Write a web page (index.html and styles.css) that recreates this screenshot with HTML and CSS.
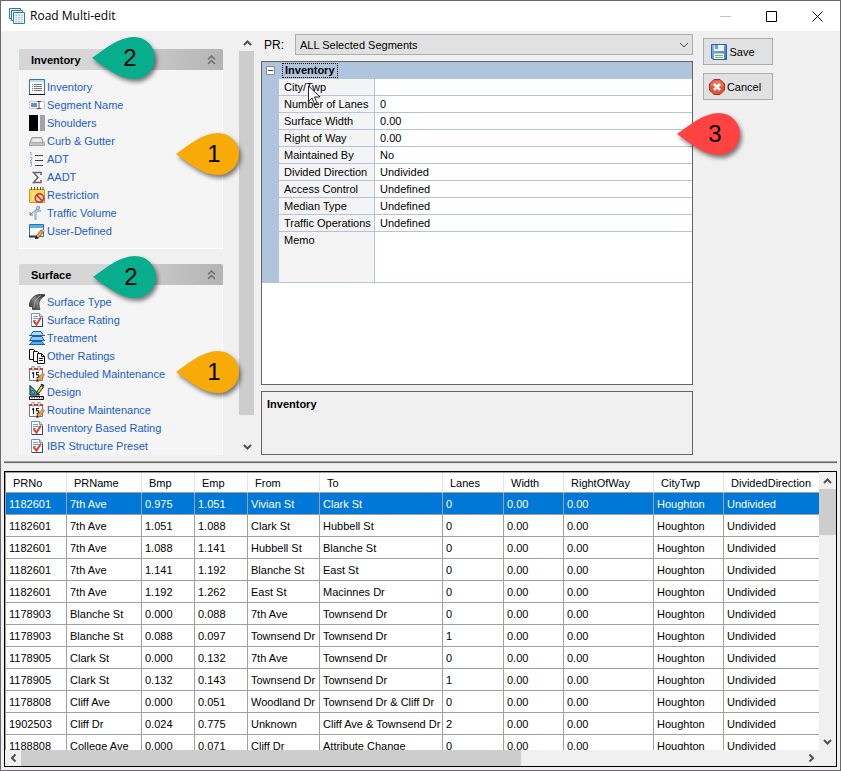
FILE: index.html
```html
<!DOCTYPE html>
<html lang="en">
<head>
<meta charset="UTF-8">
<meta name="viewport" content="width=device-width, initial-scale=1.0">
<title>Road Multi-edit</title>
<link rel="stylesheet" href="styles.css">
</head>
<body>

<!-- shared icons -->
<svg class="defs" width="0" height="0" aria-hidden="true">
  <defs>
    <linearGradient id="roadFill" x1="0" y1="1" x2="1" y2="0"><stop offset="0" stop-color="#222"/><stop offset=".5" stop-color="#888"/><stop offset="1" stop-color="#222"/></linearGradient>
    <linearGradient id="saveFill" x1="0" y1="0" x2="1" y2="1"><stop offset="0" stop-color="#8ebcf0"/><stop offset="1" stop-color="#3c74c8"/></linearGradient>
    <symbol id="chevUp" viewBox="0 0 9 6"><path d="M1 5L4.500 1.500L8 5" fill="none" stroke="#505050" stroke-width="2"/></symbol>
    <symbol id="collapse" viewBox="0 0 9 10"><path d="M1 4.500L4.500 1L8 4.500M1 9L4.500 5.500L8 9" fill="none" stroke="#6e6e6e" stroke-width="1.500"/></symbol>
    <symbol id="report" viewBox="0 0 16 16">
      <path d="M2.500 1.500h8l3 3v10h-11z" fill="#fff" stroke="#6f93cc"/>
      <path d="M10.500 1.500v3h3" fill="#cfe0f6" stroke="#6f93cc"/>
      <path d="M4 4.500h5M4 6.500h7M4 8.500h3" stroke="#7d9bcb"/>
      <path d="M3 14.500h11M13.500 6v8" stroke="#24457e"/>
      <path d="M4.500 9l3 3.500L12 5.500" fill="none" stroke="#d8462c" stroke-width="2"/>
    </symbol>
    <symbol id="calendar" viewBox="0 0 16 16">
      <path d="M.5 2.500h13v12H.5z" fill="#fff" stroke="#777"/>
      <path d="M0 2h14v2H0z" fill="#c8472f"/>
      <path d="M3 0h2v4H3zM9 0h2v4H9z" fill="#fff" stroke="#555" stroke-width=".6"/>
      <path d="M3 7.500l1.500-1V12M10 6.500H7.500v2.200c3-.8 3.500 3.300 0 3" fill="none" stroke="#222" stroke-width="1.200"/>
      <path d="M8 13l5-5 2 2-5 5-2.500.5z" fill="#f3a33c" stroke="#9a4c18" stroke-width=".6"/>
      <path d="M13 8l1.200-1.200 2 2L15 10z" fill="#e58c8c"/><path d="M7.500 15.500l.5-2.500 2 2z" fill="#222"/>
    </symbol>
    <symbol id="marker" viewBox="0 0 64 42"><path d="M0 21C14 11 27 0 42 0a21 21 0 0 1 0 42C27 42 14 31 0 21z"/></symbol>
  </defs>
</svg>

<div class="window">
  <header class="titlebar">
    <svg class="app-icon" width="17" height="16" viewBox="0 0 17 16">
      <path d="M.5.500h11v10H.5z" fill="#e6f2fa" stroke="#2d7ca8"/><path d="M2.500 2.500h11v10h-11z" fill="#e6f2fa" stroke="#2d7ca8"/>
      <path d="M4.500 4.500h11v11h-11z" fill="#fff" stroke="#2d7ca8"/>
      <path d="M6 6.500h8v8H6z" fill="#a9cdec"/><path d="M6 8.500h8M6 10.500h8M6 12.500h8M8.500 6v8M11.500 6v8" stroke="#f6efe0" stroke-width=".8"/>
    </svg>
    <span class="title">Road Multi-edit</span>
    <button class="win-btn" type="button" aria-label="Minimize"><svg width="11" height="11" viewBox="0 0 11 11"><path d="M0 5.500h11" stroke="#c4c4c4"/></svg></button>
    <button class="win-btn" type="button" aria-label="Maximize"><svg width="11" height="11" viewBox="0 0 11 11"><path d="M.5.500h10v10H.5z" fill="none" stroke="#000"/></svg></button>
    <button class="win-btn" type="button" aria-label="Close"><svg width="11" height="11" viewBox="0 0 11 11"><path d="M.5.500l10 10M10.500.500l-10 10" stroke="#000"/></svg></button>
  </header>

  <div class="upper">
    <nav class="sidebar">
      <div class="groups">
        <section class="group">
          <h2>Inventory <svg width="9" height="10"><use href="#collapse"/></svg></h2>
          <ul>
            <li><a href="#"><svg width="16" height="16" viewBox="0 0 16 16"><path d="M.5.500h15v15H.5z" fill="#fff" stroke="#2f6fd0"/><path d="M1 1h14v2H1z" fill="#bcdcf8"/><path d="M0 15.500h16" stroke="#111"/><path d="M3 5.500h1M5 5.500h8M3 7.500h1M5 7.500h8M3 9.500h1M5 9.500h8M3 11.500h1M5 11.500h8" stroke="#777"/></svg>Inventory</a></li>
            <li><a href="#"><svg width="16" height="16" viewBox="0 0 16 16"><path d="M.5 4.500h15v7H.5z" fill="#fff" stroke="#c9c9c9"/><path d="M2 6h6v4H2z" fill="#5b92cf"/><path d="M8 4.500h4M8 11.500h4M10 5v6" fill="none" stroke="#555"/></svg>Segment Name</a></li>
            <li><a href="#"><svg width="16" height="16" viewBox="0 0 16 16"><path d="M0 0h9v16H0z" fill="#000"/><path d="M11 0h5v16h-5z" fill="#a3a2a6"/></svg>Shoulders</a></li>
            <li><a href="#"><svg width="16" height="16" viewBox="0 0 16 16"><path d="M3 4.500h9.500l2 6h-14z" fill="#d6d6d6" stroke="#999"/><path d="M.5 9.500h15v3H.5z" fill="#c2c2c2" stroke="#aaa"/><path d="M4 6h8l1 3H3z" fill="#eee"/></svg>Curb &amp; Gutter</a></li>
            <li><a href="#"><svg width="16" height="16" viewBox="0 0 16 16"><path d="M6 4.500h8M6 9.500h8M6 14.500h8" stroke="#444"/><path d="M1 2l1-1v4M1 6.500h2v1.500l-2 2h2M1 11.500h2l-1 1.500 1 1-1 1.500H1" fill="none" stroke="#7fb1e0"/></svg>ADT</a></li>
            <li><a href="#"><svg width="16" height="16" viewBox="0 0 16 16"><path d="M12 6V3.500H4.500L9 8.500l-4.500 5H12V11" fill="none" stroke="#666" stroke-width="1.500"/></svg>AADT</a></li>
            <li><a href="#"><svg width="16" height="16" viewBox="0 0 16 16"><path d="M.5 2.500h15v13H.5z" fill="#fbd94f" stroke="#c99a20"/><path d="M3 7h10M3 9.500h8M3 12h5" stroke="#fff3b0"/><path d="M2.500 0v3M5.500 0v3M8.500 0v3M11.500 0v3M14 0v3" stroke="#555"/><circle cx="10.500" cy="11" r="4.200" fill="#fbe6d8" stroke="#cc3d2e" stroke-width="1.800"/><path d="M7.500 8l6 6" stroke="#cc3d2e" stroke-width="1.800"/></svg>Restriction</a></li>
            <li><a href="#"><svg width="16" height="16" viewBox="0 0 16 16"><path d="M6.500 15V9c0-3 2-3.500 5.500-3" fill="none" stroke="#96c3ea" stroke-width="2.500"/><path d="M1 10l9-8M8 2h3M1 7v3h3" fill="none" stroke="#777"/><circle cx="9" cy="3" r="1.500" fill="#ddd" stroke="#777" stroke-width=".7"/></svg>Traffic Volume</a></li>
            <li><a href="#"><svg width="16" height="16" viewBox="0 0 16 16"><path d="M.5 1.500h14v12H.5z" fill="#fff" stroke="#2378bc"/><path d="M1 2h13v3H1z" fill="#58aee2"/><path d="M0 13.500h9" stroke="#103a78" stroke-width="2"/><path d="M7 13l5-6 2.500 2-5 6-3 1z" fill="#f1a13a" stroke="#7a4210" stroke-width=".7"/><path d="M12 7l1.500-1.500L16 8l-1.500 1z" fill="#e3a2a8"/><path d="M6 16l1-3 2.500 2z" fill="#111"/></svg>User-Defined</a></li>
          </ul>
        </section>
        <section class="group">
          <h2>Surface <svg width="9" height="10"><use href="#collapse"/></svg></h2>
          <ul>
            <li><a href="#"><svg width="16" height="16" viewBox="0 0 16 16"><path d="M0 12C1 5 5 .5 11 .5h4.500V2C10 5 9 9 11 15.500H3.500V13z" fill="url(#roadFill)" stroke="#222" stroke-width=".6"/><path d="M5 14C5 9 7 4 12 1.500" fill="none" stroke="#bbb" stroke-width=".7"/></svg>Surface Type</a></li>
            <li><a href="#"><svg width="16" height="16"><use href="#report"/></svg>Surface Rating</a></li>
            <li><a href="#"><svg width="16" height="16" viewBox="0 0 16 16"><path d="M4 1.500h8l2.500 4h-13z" fill="#aedcf8" stroke="#1763ad"/><path d="M3 6.500h10l2 4H1z" fill="#8accf6" stroke="#1763ad"/><path d="M3 11.500h10l2 3H1z" fill="#5db0ee" stroke="#1763ad"/><path d="M0 5.500h16M0 10.500h16M0 14.500h16" stroke="#1763ad"/></svg>Treatment</a></li>
            <li><a href="#"><svg width="16" height="16" viewBox="0 0 16 16"><path d="M.5 1.500h4l2 2v8h-6z" fill="#fff" stroke="#111"/><path d="M4.500 3.500h4l2 2v8h-6z" fill="#fff" stroke="#111"/><path d="M8.500 5.500h4l3 3v7h-7z" fill="#fff" stroke="#111"/><path d="M12.500 5.500v3h3M10 10.500h4M10 12.500h4" fill="none" stroke="#111"/></svg>Other Ratings</a></li>
            <li><a href="#"><svg width="16" height="16"><use href="#calendar"/></svg>Scheduled Maintenance</a></li>
            <li><a href="#"><svg width="16" height="16" viewBox="0 0 16 16"><path d="M1 1.500L10.500 11H1z" fill="#1fc4c8" stroke="#111"/><path d="M3 6l3 3H3z" fill="#fff" stroke="#111" stroke-width=".7"/><path d="M.5 12.500h14v3H.5z" fill="#fff" stroke="#111"/><path d="M3 13v1.500M5.500 13v1.500M8 13v1.500M10.500 13v1.500M13 13v1.500" stroke="#111" stroke-width=".8"/><path d="M8 8l4-6.500L14.500 3 10 9l-2 1z" fill="#e8dd3a" stroke="#111" stroke-width=".9"/><path d="M12 0l3 2" stroke="#111" stroke-width="1.500"/></svg>Design</a></li>
            <li><a href="#"><svg width="16" height="16"><use href="#calendar"/></svg>Routine Maintenance</a></li>
            <li><a href="#"><svg width="16" height="16"><use href="#report"/></svg>Inventory Based Rating</a></li>
            <li><a href="#"><svg width="16" height="16"><use href="#report"/></svg>IBR Structure Preset</a></li>
          </ul>
        </section>
      </div>
      <div class="vscroll">
        <button type="button" aria-label="Scroll up"><svg width="9" height="6"><use href="#chevUp"/></svg></button>
        <div class="track"><div class="thumb thumb-nav"></div></div>
        <button class="flip" type="button" aria-label="Scroll down"><svg width="9" height="6"><use href="#chevUp"/></svg></button>
      </div>
    </nav>

    <main class="editor">
      <div class="pr-row">
        <label for="pr">PR:</label>
        <div class="select-wrap">
          <select id="pr"><option>ALL Selected Segments</option></select>
          <svg width="10" height="6" viewBox="0 0 10 6"><path d="M1 1l4 4 4-4" fill="none" stroke="#444"/></svg>
        </div>
      </div>

      <div class="props">
        <table>
          <colgroup><col class="c-gutter"><col class="c-prop"><col></colgroup>
          <thead>
            <tr>
              <th class="gutter"><button class="expander" type="button" aria-label="Collapse Inventory"></button></th>
              <th colspan="2"><span class="focus">Inventory</span></th>
            </tr>
          </thead>
          <tbody>
            <tr><td class="gutter"></td><th>City/Twp</th><td></td></tr>
            <tr><td class="gutter"></td><th>Number of Lanes</th><td>0</td></tr>
            <tr><td class="gutter"></td><th>Surface Width</th><td>0.00</td></tr>
            <tr><td class="gutter"></td><th>Right of Way</th><td>0.00</td></tr>
            <tr><td class="gutter"></td><th>Maintained By</th><td>No</td></tr>
            <tr><td class="gutter"></td><th>Divided Direction</th><td>Undivided</td></tr>
            <tr><td class="gutter"></td><th>Access Control</th><td>Undefined</td></tr>
            <tr><td class="gutter"></td><th>Median Type</th><td>Undefined</td></tr>
            <tr><td class="gutter"></td><th>Traffic Operations</th><td>Undefined</td></tr>
            <tr class="memo"><td class="gutter"></td><th>Memo</th><td></td></tr>
          </tbody>
        </table>
      </div>

      <div class="hint">Inventory</div>
    </main>

    <div class="actions">
      <button type="button">
        <svg width="16" height="16" viewBox="0 0 16 16"><path d="M.5.500h15v15H2L.5 14z" fill="url(#saveFill)" stroke="#2c5fae"/><path d="M3 1h10v6H3z" fill="#eef5fd"/><path d="M4 1h3v4H4z" fill="#6f9fdf"/><path d="M3 9.500h10V15H3z" fill="#f6faef"/><path d="M4 11.500h8M4 13.500h8" stroke="#79b953"/></svg>
        Save
      </button>
      <button type="button">
        <svg width="16" height="16" viewBox="0 0 16 16"><path d="M5 .5h6L15.500 5v6L11 15.500H5L.5 11V5z" fill="#e8513c" stroke="#a92a1c"/><path d="M5.300 1.500h5.400L14.500 5.300v2.200h-13V5.300z" fill="#f08472" opacity=".6"/><path d="M5 5l6 6M11 5l-6 6" stroke="#fff" stroke-width="2.600"/></svg>
        Cancel
      </button>
    </div>
  </div>

  <div class="splitter"></div>

  <div class="grid">
    <div class="grid-view">
      <table>
        <colgroup>
          <col class="c-no"><col class="c-name"><col class="c-mp"><col class="c-mp"><col class="c-from"><col class="c-to"><col class="c-lanes"><col class="c-width"><col class="c-row"><col class="c-city"><col>
        </colgroup>
        <thead>
          <tr><th>PRNo</th><th>PRName</th><th>Bmp</th><th>Emp</th><th>From</th><th>To</th><th>Lanes</th><th>Width</th><th>RightOfWay</th><th>CityTwp</th><th>DividedDirection</th></tr>
        </thead>
        <tbody>
          <tr class="selected"><td>1182601</td><td>7th Ave</td><td>0.975</td><td>1.051</td><td>Vivian St</td><td>Clark St</td><td>0</td><td>0.00</td><td>0.00</td><td>Houghton</td><td>Undivided</td></tr>
          <tr><td>1182601</td><td>7th Ave</td><td>1.051</td><td>1.088</td><td>Clark St</td><td>Hubbell St</td><td>0</td><td>0.00</td><td>0.00</td><td>Houghton</td><td>Undivided</td></tr>
          <tr><td>1182601</td><td>7th Ave</td><td>1.088</td><td>1.141</td><td>Hubbell St</td><td>Blanche St</td><td>0</td><td>0.00</td><td>0.00</td><td>Houghton</td><td>Undivided</td></tr>
          <tr><td>1182601</td><td>7th Ave</td><td>1.141</td><td>1.192</td><td>Blanche St</td><td>East St</td><td>0</td><td>0.00</td><td>0.00</td><td>Houghton</td><td>Undivided</td></tr>
          <tr><td>1182601</td><td>7th Ave</td><td>1.192</td><td>1.262</td><td>East St</td><td>Macinnes Dr</td><td>0</td><td>0.00</td><td>0.00</td><td>Houghton</td><td>Undivided</td></tr>
          <tr><td>1178903</td><td>Blanche St</td><td>0.000</td><td>0.088</td><td>7th Ave</td><td>Townsend Dr</td><td>0</td><td>0.00</td><td>0.00</td><td>Houghton</td><td>Undivided</td></tr>
          <tr><td>1178903</td><td>Blanche St</td><td>0.088</td><td>0.097</td><td>Townsend Dr</td><td>Townsend Dr</td><td>1</td><td>0.00</td><td>0.00</td><td>Houghton</td><td>Undivided</td></tr>
          <tr><td>1178905</td><td>Clark St</td><td>0.000</td><td>0.132</td><td>7th Ave</td><td>Townsend Dr</td><td>0</td><td>0.00</td><td>0.00</td><td>Houghton</td><td>Undivided</td></tr>
          <tr><td>1178905</td><td>Clark St</td><td>0.132</td><td>0.143</td><td>Townsend Dr</td><td>Townsend Dr</td><td>1</td><td>0.00</td><td>0.00</td><td>Houghton</td><td>Undivided</td></tr>
          <tr><td>1178808</td><td>Cliff Ave</td><td>0.000</td><td>0.051</td><td>Woodland Dr</td><td>Townsend Dr &amp; Cliff Dr</td><td>0</td><td>0.00</td><td>0.00</td><td>Houghton</td><td>Undivided</td></tr>
          <tr><td>1902503</td><td>Cliff Dr</td><td>0.024</td><td>0.775</td><td>Unknown</td><td>Cliff Ave &amp; Townsend Dr</td><td>2</td><td>0.00</td><td>0.00</td><td>Houghton</td><td>Undivided</td></tr>
          <tr><td>1188808</td><td>College Ave</td><td>0.000</td><td>0.071</td><td>Cliff Dr</td><td>Attribute Change</td><td>0</td><td>0.00</td><td>0.00</td><td>Houghton</td><td>Undivided</td></tr>
        </tbody>
      </table>
    </div>
    <div class="vscroll">
      <button type="button" aria-label="Scroll up"><svg width="9" height="6"><use href="#chevUp"/></svg></button>
      <div class="track"><div class="thumb thumb-rows"></div></div>
      <button class="flip" type="button" aria-label="Scroll down"><svg width="9" height="6"><use href="#chevUp"/></svg></button>
    </div>
    <div class="hscroll">
      <button class="left" type="button" aria-label="Scroll left"><svg width="9" height="6"><use href="#chevUp"/></svg></button>
      <div class="track"><div class="thumb thumb-cols"></div></div>
      <button class="right" type="button" aria-label="Scroll right"><svg width="9" height="6"><use href="#chevUp"/></svg></button>
    </div>
  </div>

  <!-- numbered callouts -->
  <div class="callout green c1"><svg width="64" height="42"><use href="#marker"/></svg><span>2</span></div>
  <div class="callout amber c2"><svg width="64" height="42"><use href="#marker"/></svg><span>1</span></div>
  <div class="callout green c3"><svg width="64" height="42"><use href="#marker"/></svg><span>2</span></div>
  <div class="callout amber c4"><svg width="64" height="42"><use href="#marker"/></svg><span>1</span></div>
  <div class="callout red c5"><svg width="64" height="42"><use href="#marker"/></svg><span>3</span></div>

  <svg class="cursor" width="13" height="20" viewBox="0 0 13 20"><path d="M.5 1v15.500l3.500-3.500 2.500 6 2.500-1-2.500-6H12z" fill="#fff" stroke="#222"/></svg>
</div>

</body>
</html>
```

FILE: styles.css
```css
* {
  box-sizing: border-box;
}

body {
  margin: 0;
  font-family: "Liberation Sans", Arial, sans-serif;
  font-size: 11px;
  line-height: 16px;
  color: #000;
}

button, select {
  font: inherit;
  color: inherit;
  border: none;
  margin: 0;
  padding: 0;
}

svg {
  display: block;
  flex: none;
}

table {
  border-collapse: separate;
  border-spacing: 0;
  table-layout: fixed;
  width: 100%;
}

th, td {
  text-align: left;
  font-weight: normal;
  white-space: nowrap;
  overflow: hidden;
}

.defs {
  position: absolute;
}

.window {
  position: relative;
  display: flex;
  flex-direction: column;
  height: 100vh;
  padding-bottom: 3px;
  background: #f0f0f0;
  border: 1px solid #6b696b;
  overflow: hidden;
}

/* title bar */
.titlebar {
  display: flex;
  align-items: center;
  flex: none;
  height: 30px;
  padding-left: 8px;
  background: #fff;
}

.title {
  flex: 1;
  margin-left: 4px;
  font-family: "Open Sans", "Noto Sans", sans-serif;
  font-size: 12px;
}

.win-btn {
  display: flex;
  align-items: center;
  justify-content: center;
  width: 46px;
  height: 30px;
  background: none;
}

/* upper half */
.upper {
  display: flex;
  flex: 421 1 0;
  min-height: 0;
  padding: 3px 0 6px;
}

.sidebar {
  display: flex;
  flex: none;
  width: 253px;
}

.groups {
  flex: 1;
  padding: 15px 16px 0 18px;
  overflow: hidden;
}

.group {
  margin-bottom: 15px;
}

.group h2 {
  display: flex;
  align-items: center;
  justify-content: space-between;
  height: 21px;
  margin: 0;
  padding: 0 7px 0 12px;
  font-size: 11px;
  background: linear-gradient(90deg, #d6d6d6 40%, #b4b4b4);
  border-radius: 2px 2px 0 0;
}

.group ul {
  margin: 0;
  padding: 8px 9px;
  list-style: none;
  background: #f5f5f5;
  border: 1px solid #fff;
  border-top: none;
}

.group a {
  display: flex;
  align-items: center;
  gap: 2px;
  height: 18px;
  color: #215dc6;
  text-decoration: none;
}

/* scrollbars */
.vscroll {
  display: flex;
  flex-direction: column;
  width: 15px;
  background: #f0f0f0;
}

.hscroll {
  display: flex;
  background: #f0f0f0;
}

.vscroll button, .hscroll button {
  display: flex;
  align-items: center;
  justify-content: center;
  flex: none;
  width: 16px;
  height: 17px;
  background: none;
}

.hscroll button {
  height: 16px;
}

.track {
  flex: 1;
}

.thumb {
  height: 100%;
  background: #cdcdcd;
}

.thumb-nav {
  height: 94%;
}

.thumb-rows {
  height: 19%;
}

.thumb-cols {
  width: 64%;
}

.flip svg {
  transform: rotate(180deg);
}

.left svg {
  transform: rotate(-90deg);
}

.right svg {
  transform: rotate(90deg);
}

/* property editor */
.editor {
  display: flex;
  flex: 1;
  flex-direction: column;
  gap: 6px;
  min-width: 0;
  margin-left: 7px;
}

.pr-row {
  display: flex;
  align-items: center;
}

.pr-row label {
  width: 34px;
  padding-left: 3px;
  font-size: 12px;
}

.select-wrap {
  position: relative;
  flex: 1;
}

.select-wrap select {
  display: block;
  width: 100%;
  height: 21px;
  padding: 0 4px;
  appearance: none;
  background: #e1e1e1;
  border: 1px solid #adadad;
  border-radius: 0;
}

.select-wrap svg {
  position: absolute;
  top: 8px;
  right: 4px;
  pointer-events: none;
}

.props {
  flex: 1;
  min-height: 0;
  background: #fff;
  border: 1px solid #646464;
  overflow: hidden;
}

.props th, .props td {
  height: 17px;
  padding: 1px 5px 0;
  line-height: 15px;
  border-bottom: 1px solid #b0c4de;
}

.props thead th {
  padding: 1px 3px 0;
  background: #b0c4de;
}

.props tbody th {
  background: #f4f4f4;
  border-right: 1px solid #b0c4de;
}

.props .gutter {
  padding: 0 4px;
  background: #b0c4de;
}

.c-gutter {
  width: 17px;
}

.c-prop {
  width: 96px;
}

.props .memo th, .props .memo td {
  height: 51px;
  vertical-align: top;
}

.focus {
  display: block;
  width: max-content;
  padding: 0 2px;
  line-height: 13px;
  font-weight: bold;
  border: 1px dotted #000;
}

.expander {
  display: flex;
  align-items: center;
  width: 9px;
  height: 9px;
  padding: 0 1px;
  background: #fff;
  border: 1px solid #848c96;
  border-radius: 1px;
}

.expander::before {
  content: "";
  width: 5px;
  height: 1px;
  background: #2c4a8c;
}

.hint {
  flex: none;
  height: 64px;
  padding: 4px 5px;
  font-weight: bold;
  border: 1px solid #646464;
}

.actions {
  display: flex;
  flex-direction: column;
  gap: 8px;
  flex: none;
  width: 147px;
  padding: 4px 0 0 10px;
}

.actions button {
  display: flex;
  align-items: center;
  justify-content: center;
  gap: 2px;
  width: 70px;
  height: 27px;
  padding-right: 10px;
  background: #e1e1e1;
  border: 1px solid #adadad;
}

.actions button + button {
  padding-right: 6px;
}

.splitter {
  flex: none;
  height: 3px;
  margin: 0 3px 7px;
  border-top: 1px solid #a0a0a0;
  border-bottom: 1px solid #e3e3e3;
  background: #696969;
}

/* segment list */
.grid {
  display: grid;
  flex: 294 1 0;
  grid-template-columns: 1fr 17px;
  grid-template-rows: 1fr 16px;
  min-height: 0;
  margin: 0 3px;
  border: 1px solid #000;
}

.grid .vscroll {
  width: 17px;
}

.grid-view {
  overflow: hidden;
  background: #fff;
  border-top: 1px solid #a0a0a0;
  border-left: 1px solid #a0a0a0;
}

.grid-view th {
  height: 20px;
  padding: 0 7px;
  border-right: 1px solid #e5e5e5;
  border-bottom: 1px solid #a0a0a0;
}

.grid-view td {
  height: 22px;
  padding: 0 3px;
  border-right: 1px solid #a0a0a0;
  border-bottom: 1px solid #a0a0a0;
}

.grid-view th:last-child, .grid-view td:last-child {
  border-right: none;
}

.selected td {
  color: #fff;
  background: #0078d7;
}

.c-no, .c-lanes {
  width: 61px;
}

.c-name {
  width: 75px;
}

.c-mp {
  width: 53px;
}

.c-from {
  width: 72px;
}

.c-to {
  width: 123px;
}

.c-width {
  width: 60px;
}

.c-row {
  width: 90px;
}

.c-city {
  width: 70px;
}

/* overlays */
.callout {
  position: absolute;
  width: 64px;
  height: 42px;
  font-size: 24px;
  line-height: 42px;
}

.callout svg {
  position: absolute;
  overflow: visible;
  filter: drop-shadow(2px 3px 2px rgba(0, 0, 0, 0.5));
}

.callout span {
  position: relative;
  display: block;
  padding-left: 12px;
  text-align: center;
}

.green {
  fill: #06ae8d;
}

.amber {
  fill: #f8aa08;
}

.red {
  fill: #ff4343;
}

.c1 {
  top: 36px;
  left: 91px;
}

.c2 {
  top: 132px;
  left: 175px;
}

.c3 {
  top: 255px;
  left: 92px;
}

.c4 {
  top: 350px;
  left: 175px;
}

.c5 {
  top: 112px;
  left: 676px;
}

.cursor {
  position: absolute;
  top: 84px;
  left: 307px;
}
```
